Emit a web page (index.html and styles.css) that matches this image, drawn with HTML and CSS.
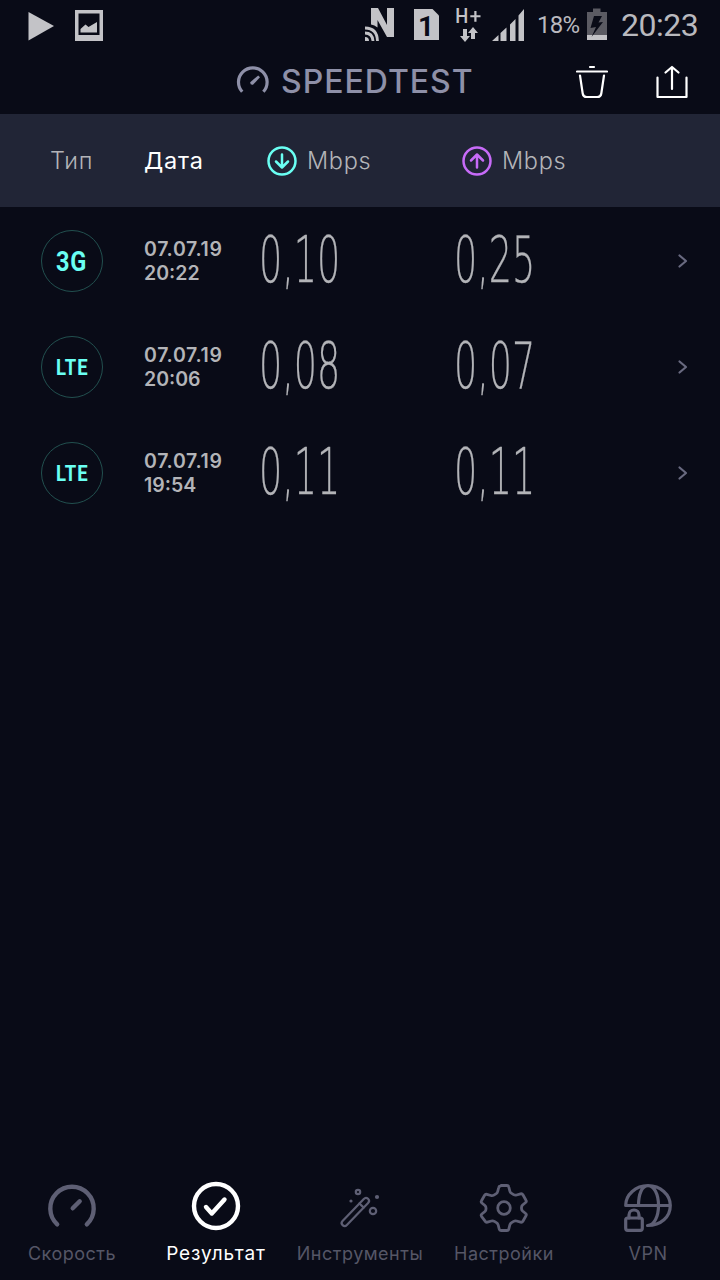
FILE: index.html
```html
<!DOCTYPE html>
<html lang="ru">
<head>
    <meta charset="UTF-8">
    <title>Speedtest - Результат</title>
    <meta name="viewport" content="width=device-width, initial-scale=1">
    <link rel="stylesheet" href="styles.css">
</head>
<body>
    <div class="statusbar">
        <svg class="st-play" width="26" height="50" viewBox="28 0 26 50"><path d="M28.5 12v28.5L54 26z"/></svg>
        <svg class="st-photo" width="28" height="50" viewBox="75 0 28 50">
            <path fill-rule="evenodd" d="M75 10h28v31H75zM78.500 13.500v21.500h21v-21.500z"/>
            <path d="M80.500 32.500V29l5-4.500 3 2.500 8.500-5v10.500z"/>
        </svg>
        <svg class="st-nfc" width="30" height="50" viewBox="364 0 30 50">
            <path d="M371 8h7l9 17V8h7v29h-7l-9.500-17v7.500q-3-2.500-6.500-3z"/>
            <g class="st-waves"><path d="M365 28q12 0 12.500 13M365 33q7.500 0 8 8"/></g>
            <path d="M365 37q4 0 4 4h-4z"/>
        </svg>
        <svg class="st-sim" width="25" height="50" viewBox="414 0 25 50">
            <path d="M414 9h18.500l6.500 6.500V40h-25z"/>
            <text x="418" y="36">1</text>
        </svg>
        <svg class="st-data" width="25" height="50" viewBox="456 0 25 50">
            <text x="455.300" y="23" textLength="13" lengthAdjust="spacingAndGlyphs">H</text>
            <path d="M474.300 11h2.200v4.200h4v2h-4v4.500h-2.200v-4.500h-4v-2h4z"/>
            <path d="M463 29h4v7h3l-5 6-5-6h3zM471 39h4v-6h3l-5-6-5 6h3z"/>
        </svg>
        <svg class="st-signal" width="33" height="50" viewBox="492 0 33 50">
            <path d="M492 41l6.500-6v6zM500.500 33l6-5.500V41h-6zM510 24.500l5.500-5.500v22H510zM518.500 15.500l5.500-6.500v32h-5.500z"/>
        </svg>
        <span class="battery-text">18%</span>
        <svg class="st-battery" width="20" height="50" viewBox="587 0 20 50">
            <path class="battery-body" d="M587 12h6V8.500h7.500V12h6.500v28h-20z"/>
            <path d="M587 35h20v5h-20z"/>
            <path class="battery-bolt" d="M594 16h8l-3.500 6.500 4.500-.5-11.500 15 4.500-10-5.500 1z"/>
        </svg>
        <span class="clock">20:23</span>
    </div>

    <header>
        <div class="logo">
            <svg width="34" height="34" viewBox="0 0 34 34">
                <path class="logo-ring" d="M6.200 26.700A14.300 14.300 0 1 1 27.400 26.700"/>
                <path class="logo-needle" d="M14.200 17.200l8-6.700 1.800 1.800-7 7.500q-3 .5-2.800-2.600z"/>
            </svg>
            <h1>SPEEDTEST</h1>
        </div>
        <div class="actions">
            <svg width="32" height="34" viewBox="0 0 32 34">
                <path d="M14 2h4M1 6.500h30M4 10.500l2.700 18q.5 3.500 4 3.500h10.600q3.500 0 4-3.500l2.700-18"/>
            </svg>
            <svg width="32" height="34" viewBox="0 0 32 34">
                <path d="M1.500 12.500V32h29V12.500M16 24V2M9.500 7.500L16 2l6.500 5.500"/>
            </svg>
        </div>
    </header>

    <div class="table-head">
        <span class="col-type">Тип</span>
        <span class="col-date active">Дата</span>
        <span class="col-speed down">
            <svg width="30" height="30" viewBox="0 0 30 30"><circle cx="15" cy="15" r="13.500"/><path d="M15 8.500v12.500M9 15.500l6 6 6-6"/></svg>
            Mbps
        </span>
        <span class="col-speed up">
            <svg width="30" height="30" viewBox="0 0 30 30"><circle cx="15" cy="15" r="13.500"/><path d="M15 21.500V9M9 14.500l6-6 6 6"/></svg>
            Mbps
        </span>
    </div>

    <main>
        <div class="result">
            <div class="badge badge-3g"><span>3G</span></div>
            <div class="date"><span class="day">07.07.19</span><br>20:22</div>
            <div class="speed"><span>0,10</span></div>
            <div class="speed"><span>0,25</span></div>
            <svg class="chevron" width="12" height="16" viewBox="0 0 12 16"><path d="M2.500 2.500L9 8l-6.500 5.500"/></svg>
        </div>
        <div class="result">
            <div class="badge"><span>LTE</span></div>
            <div class="date"><span class="day">07.07.19</span><br>20:06</div>
            <div class="speed"><span>0,08</span></div>
            <div class="speed"><span>0,07</span></div>
            <svg class="chevron" width="12" height="16" viewBox="0 0 12 16"><path d="M2.500 2.500L9 8l-6.500 5.500"/></svg>
        </div>
        <div class="result">
            <div class="badge"><span>LTE</span></div>
            <div class="date"><span class="day">07.07.19</span><br>19:54</div>
            <div class="speed"><span>0,11</span></div>
            <div class="speed"><span>0,11</span></div>
            <svg class="chevron" width="12" height="16" viewBox="0 0 12 16"><path d="M2.500 2.500L9 8l-6.500 5.500"/></svg>
        </div>
    </main>

    <nav>
        <a class="tab-speed">
            <svg width="48" height="48" viewBox="0 0 48 48"><path class="bold" d="M9.200 40.300A21.700 21.700 0 1 1 38.800 40.300M24.700 24.300l7-7"/></svg>
            Скорость
        </a>
        <a class="tab-result active">
            <svg width="48" height="48" viewBox="0 0 48 48"><g class="bold"><circle cx="24" cy="22" r="22"/><path d="M14 23l5.800 6.500L32.500 15.500"/></g></svg>
            Результат
        </a>
        <a class="tab-tools">
            <svg width="48" height="48" viewBox="0 0 48 48">
                <g class="thin">
                    <g transform="rotate(-46 8.700 39)"><rect x="5.700" y="36" width="36.600" height="6" rx="3"/><path d="M33 36v6"/></g>
                    <circle cx="22" cy="8" r="2.200"/>
                    <circle cx="37" cy="27" r="3.200"/>
                </g>
                <g class="dots"><circle cx="41" cy="13" r="2.100"/><circle cx="15" cy="17" r="1.600"/></g>
            </svg>
            Инструменты
        </a>
        <a class="tab-settings">
            <svg width="48" height="48" viewBox="0 0 48 48">
                <path d="M21 1.500h6q1.500 0 1.800 1.500l1 4q.4 1.600 1.800 2.400l2 1.200q1.400.8 3 .4l4-1.200q1.500-.4 2.300 1l3.100 5.400q.8 1.300-.4 2.300l-3 2.500q-1.100 1-1.100 2.500v1q0 1.500 1.100 2.500l3 2.500q1.200 1 .4 2.300l-3.100 5.400q-.8 1.400-2.300 1l-4-1.200q-1.600-.4-3 .4l-2 1.200q-1.400.8-1.800 2.400l-1 4q-.3 1.500-1.800 1.500h-6q-1.500 0-1.800-1.500l-1-4q-.4-1.600-1.800-2.400l-2-1.200q-1.400-.8-3-.4l-4 1.200q-1.500.4-2.300-1L1.500 32.300q-.8-1.300.4-2.300l3-2.500q1.100-1 1.100-2.500v-1q0-1.500-1.100-2.500l-3-2.500q-1.200-1-.4-2.300l3.100-5.400q.8-1.400 2.300-1l4 1.200q1.600.4 3-.4l2-1.200q1.400-.8 1.800-2.400l1-4q.3-1.500 1.800-1.500z"/>
                <circle cx="24" cy="24" r="6.300"/>
            </svg>
            Настройки
        </a>
        <a class="tab-vpn">
            <svg width="48" height="48" viewBox="0 0 48 48">
                <g class="mid">
                    <path d="M1.700 21.500A22.300 19.800 0 0 1 46.300 21.500C46.300 33 37 41.500 23.500 41.500M1.700 21.500H46M14.500 21.500C14.500 10 18 1.700 24 1.700S34.500 10 34.500 21.500 30 41.500 23.500 41.500"/>
                    <rect x="1.700" y="34" width="16.600" height="12.300" rx="2"/>
                    <path d="M5 34v-3a5 5 0 0 1 10 0v3"/>
                </g>
            </svg>
            VPN
        </a>
    </nav>
</body>
</html>
```
FILE: styles.css
```css
body {
    margin: 0;
    height: 1280px;
    display: flex;
    flex-direction: column;
    background: #090b17;
    color: #b3b4b8;
    font-family: Inter, "Noto Sans", sans-serif;
    overflow: hidden;
}
svg {
    display: block;
    flex: none;
    fill: none;
    stroke-linecap: round;
    stroke-linejoin: round;
}

/* status bar */
.statusbar {
    height: 50px;
    display: flex;
    align-items: center;
    font-family: Roboto, sans-serif;
    color: #b9b9be;
    white-space: nowrap;
}
.statusbar svg { fill: #c3c3c7; }
.st-play { margin-left: 28px; }
.st-photo { margin-left: 21px; }
.st-nfc { margin-left: 261px; }
.statusbar .st-waves { fill: none; stroke: #c3c3c7; stroke-width: 2.800; stroke-linecap: butt; }
.st-sim { margin-left: 20px; }
.st-sim text { fill: #090b17; font-size: 28px; font-weight: bold; }
.st-data { margin-left: 17px; }
.st-data text { font-size: 21px; font-weight: 500; }
.st-signal { margin-left: 11px; }
.battery-text {
    width: 50px;
    margin-left: 12px;
    font-size: 24px;
    line-height: 54px;
    letter-spacing: -0.8px;
}
.battery-body { fill: #5b5b63; }
.battery-bolt { fill: #090b17; }
.clock {
    margin-left: 14px;
    font-size: 32px;
    line-height: 52px;
    letter-spacing: -0.5px;
}

/* title */
header {
    height: 64px;
    display: grid;
    grid-template-columns: 236px 1fr 144px;
    align-items: center;
}
.logo {
    grid-column: 2;
    display: flex;
    align-items: center;
    gap: 11px;
    color: #8e90a8;
}
.logo-ring { stroke: #8e90a8; stroke-width: 3.200; stroke-linecap: butt; }
.logo-needle { fill: #8e90a8; }
h1 {
    margin: 0;
    font-size: 32px;
    line-height: 36px;
    font-weight: 500;
    letter-spacing: 1px;
}
.actions {
    display: flex;
    gap: 48px;
}
.actions svg { stroke: #fff; stroke-width: 2.200; }

/* column titles */
.table-head {
    height: 93px;
    display: grid;
    grid-template-columns: 144px 123px 195px 1fr;
    align-items: center;
    background: #212536;
    font-size: 23.500px;
    font-weight: 300;
    letter-spacing: 0.7px;
}
.col-type { padding-left: 50px; }
.table-head .active { color: #fff; font-weight: 400; letter-spacing: 0.8px; }
.col-speed {
    display: flex;
    align-items: center;
    gap: 10px;
}
.col-speed svg { stroke-width: 2.500; }
.down svg { stroke: #6afff3; }
.up svg { stroke: #c76bf8; }

/* results */
main {
    flex: 1;
    padding-top: 1px;
}
.result {
    height: 106px;
    display: grid;
    grid-template-columns: 103px 115px 195px 223px 12px;
    padding-left: 41px;
    align-items: center;
}
.badge {
    box-sizing: border-box;
    width: 62px;
    height: 62px;
    border: 1.500px solid #22504f;
    border-radius: 50%;
    display: flex;
    align-items: center;
    justify-content: center;
    color: #6afff3;
    font-family: Roboto, sans-serif;
    font-size: 22px;
    font-weight: 700;
    letter-spacing: 1px;
}
.badge span { transform: scaleX(0.84); }
.badge-3g { font-size: 28px; }
.date {
    font-size: 19.500px;
    line-height: 24px;
    font-weight: 600;
}
.day { letter-spacing: 0.65px; }
.speed {
    height: 82px;
    font-family: "DejaVu Sans", sans-serif;
    font-size: 64px;
    line-height: 80px;
    font-weight: 200;
    white-space: nowrap;
}
.speed span {
    display: inline-block;
    transform: scaleX(0.57);
    transform-origin: 0 50%;
    -webkit-text-stroke: 0.3px #b3b4b8;
}
.chevron { stroke: #696a80; stroke-width: 2.200; }

/* bottom tabs */
nav {
    height: 96px;
    display: grid;
    grid-template-columns: repeat(5, 1fr);
}
nav a {
    display: flex;
    flex-direction: column;
    align-items: center;
    gap: 10px;
    color: #555666;
    font-size: 18px;
    line-height: 24px;
    letter-spacing: 0.5px;
    white-space: nowrap;
}
nav svg {
    stroke: #5e5f74;
    stroke-width: 2.800;
    overflow: visible;
}
nav .bold { stroke-width: 4.400; }
nav .mid { stroke-width: 3.200; }
nav .thin { stroke-width: 2.200; }
nav .dots { fill: #5e5f74; stroke: none; }
nav .active { color: #fff; font-size: 19px; letter-spacing: 0.900px; }
nav .active svg { stroke: #fff; }
```
